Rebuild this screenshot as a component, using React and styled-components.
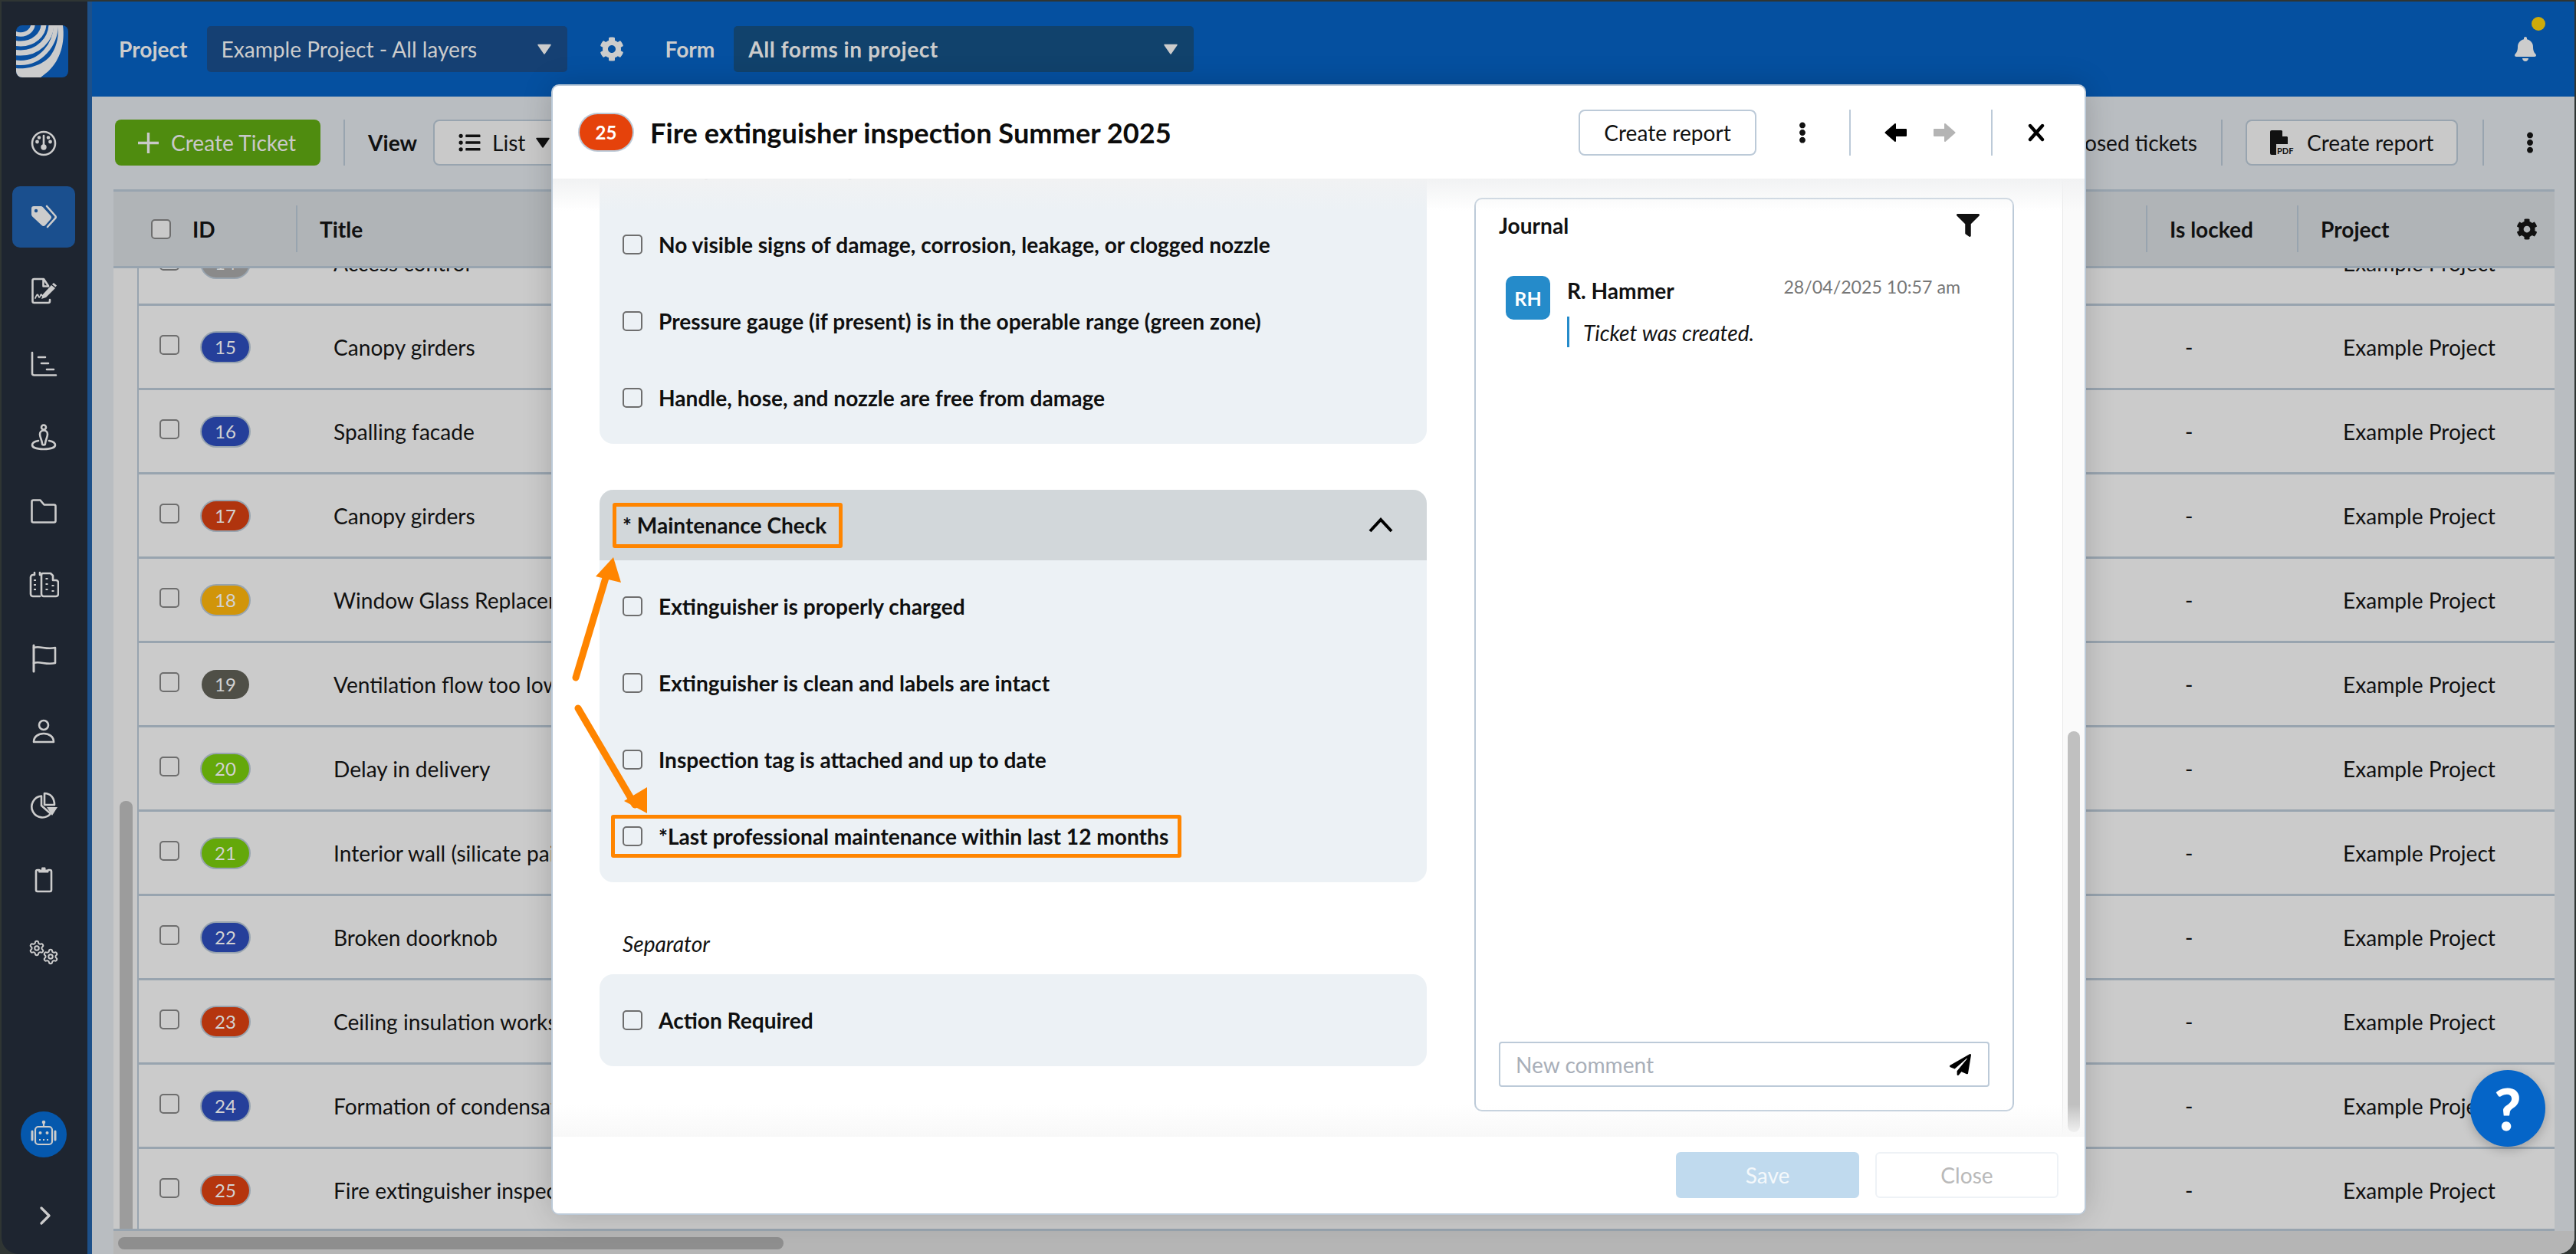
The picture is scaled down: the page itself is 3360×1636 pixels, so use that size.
import React from 'react';
import styled, { createGlobalStyle } from 'styled-components';
import { FaCog, FaBell, FaFilter, FaPaperPlane, FaEllipsisV, FaListUl } from 'react-icons/fa';
import { Settings } from 'lucide-react';

const Global = createGlobalStyle`
  html, body { margin: 0; padding: 0; background: #2f3533; }
  body { font-family: "Lato", "Liberation Sans", sans-serif; font-size: 28.1px; color: #111; }
  *, *::before, *::after { box-sizing: border-box; }
`;

const Window = styled.div`
  position: relative;
  width: 3360px;
  height: 1636px;
  padding: 2px 2px 0 2px;
  overflow: hidden;
`;
const Shell = styled.div`
  display: flex;
  width: 100%;
  height: 100%;
  border-radius: 0 0 22px 22px;
  overflow: hidden;
`;
const Sidebar = styled.nav`
  flex: 0 0 118px;
  display: flex;
  flex-direction: column;
  align-items: center;
  background: #1e2530;
  border-right: 6px solid #1d5089;
  padding: 31px 2px 30px 0;
  color: #cccccc;
`;
const Logo = styled.svg`
  width: 68px;
  height: 68px;
  margin: 0 0 46px -4px;
  flex: none;
`;
const NavItem = styled.div`
  flex: none;
  width: 82px;
  height: 80px;
  margin-bottom: 16px;
  display: flex;
  align-items: center;
  justify-content: center;
  border-radius: 10px;
  background: ${p => (p.$active ? '#1a4f8e' : 'transparent')};
`;
const NavSvg = styled.svg`
  width: 40px;
  height: 40px;
  fill: none;
  stroke: currentColor;
  stroke-width: 2.6;
  stroke-linecap: round;
  stroke-linejoin: round;
`;
const RobotCircle = styled.div`
  margin-top: auto;
  width: 60px;
  height: 60px;
  border-radius: 50%;
  background: #0558ad;
  display: flex;
  align-items: center;
  justify-content: center;
`;
const Expand = styled.div`
  margin-top: 56px;
  height: 40px;
  margin-left: 4px;
  display: flex;
  align-items: center;
`;
const Main = styled.div`
  flex: 1;
  min-width: 0;
  display: flex;
  flex-direction: column;
  background: #b9bdc1;
`;
const TopBar = styled.header`
  flex: 0 0 124px;
  display: flex;
  align-items: center;
  padding: 0 50px 0 35px;
  background: #0550a0;
  color: #cccccc;
`;
const TopLabel = styled.span`
  font-weight: 700;
  margin-right: ${p => p.$gap}px;
`;
const TopSelect = styled.div`
  width: ${p => p.$width}px;
  height: 60px;
  border-radius: 5px;
  background: ${p => p.$bg};
  font-weight: ${p => p.$weight};
  letter-spacing: ${p => p.$spacing || 0}px;
  display: flex;
  align-items: center;
  justify-content: space-between;
  padding: 0 21px 0 19px;
`;
const TopGear = styled(FaCog)`
  width: 32px;
  height: 32px;
  margin: 0 54px 0 42px;
`;
const BellWrap = styled.div`
  position: relative;
  margin-left: auto;
  width: 28px;
  height: 32px;
`;
const BellIcon = styled(FaBell)`
  width: 28px;
  height: 32px;
`;
const BellDot = styled.span`
  position: absolute;
  top: -26px;
  left: 22px;
  width: 18px;
  height: 18px;
  border-radius: 50%;
  background: #cdaa0a;
`;
const Caret = styled.svg`
  width: 18px;
  height: 14px;
  fill: currentColor;
`;
const Toolbar = styled.div`
  flex: 0 0 121px;
  display: flex;
  align-items: flex-start;
  padding: 30px 0 0 30px;
`;
const CreateButton = styled.div`
  width: 268px;
  height: 60px;
  background: #4f8c0f;
  border-radius: 8px;
  color: #c9c9c9;
  display: flex;
  align-items: center;
  gap: 16px;
  padding-left: 30px;
`;
const PlusIcon = styled.svg`
  width: 27px;
  height: 27px;
  stroke: #c9c9c9;
  stroke-width: 3.4;
  fill: none;
`;
const ToolDivider = styled.span`
  flex: none;
  width: 2px;
  height: 60px;
  background: #98a4af;
  margin: ${p => p.$margin};
`;
const ToolLabel = styled.span`
  font-weight: 700;
  line-height: 60px;
  margin-right: 21px;
`;
const OutlineButton = styled.div`
  flex: none;
  height: 60px;
  width: ${p => p.$width}px;
  border: 2px solid #98a4af;
  border-radius: 8px;
  background: #c9c9c9;
  display: flex;
  align-items: center;
  gap: ${p => p.$gap}px;
  padding-left: ${p => p.$pad}px;
`;
const ListGlyph = styled(FaListUl)`
  width: 31px;
  height: 28px;
`;
const RightTools = styled.div`
  margin-left: auto;
  display: flex;
  align-items: flex-start;
  padding-right: 44px;
`;
const ClosedTickets = styled.span`
  line-height: 60px;
`;
const MoreIcon = styled(FaEllipsisV)`
  width: 28px;
  height: 28px;
  margin-top: 16px;
`;
const TableArea = styled.div`
  flex: 1;
  min-height: 0;
  display: flex;
  flex-direction: column;
  margin-left: 28px;
`;
const TableHead = styled.div`
  flex: 0 0 103px;
  margin-right: 26px;
  display: flex;
  align-items: center;
  background: #b0b4b7;
  border-top: 3px solid #98a4af;
  border-bottom: 3px solid #98a4af;
  font-weight: 700;
  position: relative;
  z-index: 1;
`;
const HeadFirst = styled.div`
  flex: 0 0 238px;
  display: flex;
  align-items: center;
  padding-left: 49px;
  gap: 28px;
`;
const HeadCell = styled.div`
  flex: ${p => (p.$width ? `0 0 ${p.$width}px` : 1)};
  height: 61px;
  border-left: 2px solid #98a4af;
  display: flex;
  align-items: center;
  justify-content: space-between;
  padding: 0 22px 0 ${p => p.$pad || 29}px;
`;
const HeadGear = styled(FaCog)`
  width: 28px;
  height: 28px;
`;
const Check = styled.span`
  flex: none;
  display: block;
  width: 26px;
  height: 26px;
  border: 2px solid ${p => p.$color || '#6e6e6e'};
  border-radius: 5px;
  background: ${p => p.$bg || 'transparent'};
`;
const TableBody = styled.div`
  flex: 1;
  min-height: 0;
  margin-right: 26px;
  display: flex;
  overflow: hidden;
  border-bottom: 3px solid #98a4af;
`;
const VTrack = styled.div`
  flex: 0 0 31px;
  background: #c8c8c8;
  padding: 0 6px 0 8px;
  display: flex;
  flex-direction: column;
  justify-content: flex-end;
`;
const VThumb = styled.div`
  height: 558px;
  background: #9c9c9c;
  border-radius: 8px 8px 0 0;
`;
const Rows = styled.div`
  flex: 1;
  min-width: 0;
  background: #cbcbcb;
  border-left: 2px solid #98a4af;
  overflow: hidden;
`;
const RowStack = styled.div`
  margin-top: -61px;
`;
const Row = styled.div`
  height: 110px;
  display: flex;
  align-items: center;
  border-bottom: 3px solid #98a4af;
`;
const RowCheckCell = styled.div`
  flex: 0 0 82px;
  padding-left: 27px;
  margin-top: -5px;
`;
const RowBadgeCell = styled.div`
  flex: 0 0 172px;
`;
const Badge = styled.span`
  display: flex;
  align-items: center;
  justify-content: center;
  width: 62px;
  height: 38px;
  border-radius: 19px;
  font-size: 24px;
  color: #d2d2d2;
  background: ${p => p.$bg};
  box-shadow: ${p => (p.$plain ? 'none' : '0 0 0 2px #98a4af')};
`;
const RowTitle = styled.div`
  flex: 1;
  min-width: 0;
  white-space: nowrap;
  overflow: hidden;
`;
const RowDash = styled.div`
  flex: 0 0 206px;
`;
const RowProject = styled.div`
  flex: 0 0 276px;
  white-space: nowrap;
`;
const HScroll = styled.div`
  flex: 0 0 30px;
  background: #b5b5b5;
  padding: 8px 0 0 6px;
`;
const HThumb = styled.div`
  width: 868px;
  height: 16px;
  border-radius: 8px;
  background: #8e8e8e;
`;
const Help = styled.div`
  position: absolute;
  left: 3222px;
  top: 1396px;
  width: 98px;
  height: 100px;
  border-radius: 50%;
  background: #0565c8;
  color: #fff;
  font: 900 76px/100px "Lato", sans-serif;
  text-align: center;
  box-shadow: 0 4px 14px rgba(0, 0, 0, 0.22);
  z-index: 3;
`;

/* Modal */
const Modal = styled.section`
  position: absolute;
  left: 721px;
  top: 112px;
  width: 1998px;
  height: 1471px;
  display: flex;
  flex-direction: column;
  background: #fff;
  border-radius: 8px;
  overflow: hidden;
  z-index: 2;
`;
const ModalGlow = styled.div`
  position: absolute;
  left: 721px;
  top: 112px;
  width: 1998px;
  height: 1471px;
  border-radius: 8px;
  box-shadow: 0 0 0 2px #bccad8, 0 0 40px rgba(0, 0, 0, 0.2);
  z-index: 1;
`;
const ModalHeader = styled.header`
  flex: 0 0 121px;
  display: flex;
  align-items: center;
  padding-left: 35px;
  position: relative;
  z-index: 2;
  background: #fff;
`;
const ModalBadge = styled.span`
  flex: none;
  width: 69px;
  height: 47px;
  border-radius: 24px;
  background: #e5420b;
  box-shadow: 0 0 0 2px #bccad8;
  color: #fff;
  font-size: 24px;
  font-weight: 700;
  display: flex;
  align-items: center;
  justify-content: center;
`;
const ModalTitle = styled.h1`
  margin: 0 0 0 23px;
  font-size: 36.2px;
  font-weight: 700;
  color: #0c0c0c;
  flex: 1;
`;
const ReportButton = styled.div`
  width: 232px;
  height: 60px;
  border: 2px solid #bccad8;
  border-radius: 8px;
  display: flex;
  align-items: center;
  justify-content: center;
`;
const HeaderTools = styled.div`
  display: flex;
  align-items: center;
  padding-right: 52px;
`;
const HeaderDots = styled(FaEllipsisV)`
  width: 28px;
  height: 28px;
  margin: 0 47px 0 46px;
`;
const HeaderDivider = styled.span`
  width: 2px;
  height: 60px;
  background: #bccad8;
`;
const ArrowSvg = styled.svg`
  flex: none;
  width: 30px;
  height: 26px;
  margin: ${p => p.$margin};
  fill: ${p => p.$color};
  stroke: ${p => p.$color};
  stroke-width: 2;
  stroke-linejoin: round;
`;
const CloseSvg = styled.svg`
  flex: none;
  width: 22px;
  height: 24px;
  margin-left: 46px;
  stroke: #000;
  stroke-width: 4.4;
  stroke-linecap: round;
`;
const ModalBody = styled.div`
  flex: 1;
  min-height: 0;
  display: flex;
  position: relative;
  overflow: hidden;
  &::before, &::after {
    content: '';
    position: absolute;
    left: 0;
    right: 0;
    height: 42px;
    pointer-events: none;
    z-index: 1;
  }
  &::before { top: 0; background: linear-gradient(#f1f2f3, rgba(255, 255, 255, 0)); }
  &::after { bottom: 0; background: linear-gradient(rgba(255, 255, 255, 0), #f8f8f8); }
`;
const FormColumn = styled.div`
  flex: 0 0 1140px;
  padding-left: 61px;
  margin: -74px 62px 0 0;
`;
const Section = styled.div`
  background: #ecf1f5;
  border-radius: 18px;
  padding: ${p => (p.$flush ? '0 0 10px' : '10px 0')};
  margin-bottom: 60px;
  &:last-child { margin-bottom: 0; }
`;
const SectionHead = styled.div`
  height: 92px;
  background: #d2d7da;
  border-radius: 18px 18px 0 0;
  margin-bottom: 10px;
  display: flex;
  align-items: center;
  justify-content: space-between;
  padding: 0 44px 0 17px;
`;
const HeadHighlight = styled.div`
  width: 300px;
  height: 59px;
  border: 5px solid #ff8500;
  border-radius: 3px;
  padding-left: 8px;
  display: flex;
  align-items: center;
  font-weight: 700;
`;
const Chevron = styled.svg`
  width: 32px;
  height: 20px;
  fill: none;
  stroke: #000;
  stroke-width: 4;
`;
const CheckRow = styled.div`
  position: relative;
  height: 100px;
  display: flex;
  align-items: center;
  gap: 21px;
  padding-left: 30px;
  font-weight: 700;
  color: #0f0f0f;
  ${p => p.$marked && `
    &::after {
      content: '';
      position: absolute;
      left: 15px;
      top: 22px;
      width: 744px;
      height: 56px;
      border: 5px solid #ff8500;
      border-radius: 3px;
    }
  `}
`;
const SeparatorLabel = styled.div`
  font-style: italic;
  line-height: 40px;
  padding-left: 30px;
  margin: 0 0 20px;
`;
const JournalCard = styled.aside`
  flex: 0 0 704px;
  height: 1192px;
  margin: 25px 63px 0 0;
  border: 2px solid #bccad8;
  border-radius: 10px;
  display: flex;
  flex-direction: column;
  padding: 0 30px 30px;
`;
const JournalHead = styled.div`
  height: 68px;
  display: flex;
  align-items: center;
  justify-content: space-between;
  font-weight: 700;
  padding: 0 12px 0 0;
`;
const FilterIcon = styled(FaFilter)`
  width: 32px;
  height: 30px;
`;
const Entry = styled.div`
  display: flex;
  margin: 32px 0 0 9px;
  flex: 1;
  gap: 22px;
`;
const Avatar = styled.div`
  flex: none;
  width: 58px;
  height: 57px;
  border-radius: 10px;
  background: #258bca;
  color: #fff;
  font-size: 25px;
  font-weight: 700;
  display: flex;
  align-items: center;
  justify-content: center;
`;
const EntryBody = styled.div`
  flex: 1;
`;
const EntryTop = styled.div`
  display: flex;
  justify-content: space-between;
  align-items: flex-start;
  padding-right: 38px;
`;
const Author = styled.span`
  font-weight: 700;
  margin-top: 2px;
`;
const Stamp = styled.span`
  font-size: 23.2px;
  color: #777;
`;
const Quote = styled.div`
  margin-top: 17px;
  border-left: 3px solid #258bca;
  height: 40px;
  line-height: 42px;
  padding-left: 18px;
  font-style: italic;
`;
const CommentBox = styled.div`
  height: 59px;
  border: 2px solid #bccad8;
  border-radius: 4px;
  display: flex;
  align-items: center;
  justify-content: space-between;
  padding: 0 22px 0 20px;
  color: #a9afb9;
`;
const SendIcon = styled(FaPaperPlane)`
  width: 28px;
  height: 28px;
  color: #000;
`;
const ScrollGutter = styled.div`
  flex: 0 0 29px;
  background: #fafafa;
  border-left: 1px solid #e8e8e8;
  padding: 0 6px 6px;
  display: flex;
  flex-direction: column;
  justify-content: flex-end;
`;
const ModalThumb = styled.div`
  height: 523px;
  border-radius: 8px;
  background: #c0c0c0;
`;
const ModalFooter = styled.footer`
  flex: 0 0 100px;
  background: #fff;
  display: flex;
  align-items: center;
  justify-content: flex-end;
  gap: 21px;
  padding: 0 34px 0 0;
  position: relative;
  z-index: 2;
`;
const FooterButton = styled.div`
  width: 239px;
  height: 60px;
  border-radius: 6px;
  display: flex;
  align-items: center;
  justify-content: center;
  background: ${p => (p.$primary ? '#c0daee' : '#fff')};
  color: ${p => (p.$primary ? '#f4f8fb' : '#b9b9b9')};
  border: 2px solid ${p => (p.$primary ? '#c0daee' : '#eef2f6')};
`;
const Annotation = styled.svg`
  position: absolute;
  left: 740px;
  top: 720px;
  width: 120px;
  height: 350px;
  z-index: 4;
  pointer-events: none;
`;

const CaretDown = () => (
  <Caret viewBox="0 0 18 14"><path d="M1 1.5h16L9 13z" stroke="currentColor" strokeWidth="1.5" strokeLinejoin="round" /></Caret>
);

const icons = [
  <NavSvg key="0" viewBox="0 0 40 40"><circle cx="20" cy="20" r="15" /><path d="M20 10v13" /><circle cx="20" cy="25" r="2.4" fill="currentColor" /><circle cx="11.5" cy="18" r="1.1" fill="currentColor" /><circle cx="14" cy="12.5" r="1" fill="currentColor" /><circle cx="26" cy="12.5" r="1" fill="currentColor" /><circle cx="28.5" cy="18" r="1.1" fill="currentColor" /></NavSvg>,
  <NavSvg key="1" viewBox="0 0 40 40"><path fill="currentColor" stroke="none" d="M4 9a3 3 0 0 1 3-3h9a4 4 0 0 1 3 1.3l10 11a3.5 3.5 0 0 1 0 4.7l-7 8a3 3 0 0 1-4.5 0L5.2 19.5A4 4 0 0 1 4 17z" /><circle cx="10" cy="12" r="2.2" fill="#1a4f8e" stroke="none" /><path d="M24 6l11 12.5a2.5 2.5 0 0 1 0 3.3L25 33" /></NavSvg>,
  <NavSvg key="2" viewBox="0 0 40 40"><path d="M26 14l-6-9H7.5a2 2 0 0 0-2 2v27a2 2 0 0 0 2 2H26a2 2 0 0 0 2-2v-2" /><path d="M19.500 6v8.500H26" /><path d="M9 30c2-5 3-6 4-3s2 2 3-1 2 3 5 2" strokeWidth="1.8" /><path fill="currentColor" stroke="none" d="M30 13l5 4-12 12-6 2 2-6z" /><path d="M33 10l4 3.400-1.600 2-4.500-3.500z" fill="currentColor" stroke="none" /></NavSvg>,
  <NavSvg key="3" viewBox="0 0 40 40"><path d="M5 5v27a2.500 2.500 0 0 0 2.500 2.500H36" /><path d="M13 11h9M17 19h9M24 27h9" /></NavSvg>,
  <NavSvg key="4" viewBox="0 0 40 40"><circle cx="20" cy="6.500" r="3" /><path d="M15 15.500a5 5 0 0 1 10 0c0 4-2.500 7-3 12a2 2 0 0 1-4 0c-.5-5-3-8-3-12z" /><path d="M13 24c-5 1-8 3-8 5.500C5 33 11.500 35 20 35s15-2 15-5.500c0-2.500-3-4.500-8-5.500" /></NavSvg>,
  <NavSvg key="5" viewBox="0 0 40 40"><path d="M4.500 32.500V7.500a2 2 0 0 1 2-2h9l5 6h13a2 2 0 0 1 2 2v19a2 2 0 0 1-2 2h-27a2 2 0 0 1-2-2z" /></NavSvg>,
  <NavSvg key="6" viewBox="0 0 40 40"><path d="M15 35H6a3 3 0 0 1-3-3V10a3 3 0 0 1 3-3h2V4M15 4v3h2" /><path d="M17 7a2 2 0 0 1 2-2h10l3 3v6h4a3 3 0 0 1 3 3v15a3 3 0 0 1-3 3H20a3 3 0 0 1-3-3z" /><path d="M8.500 13v2M8.500 19v2M8.500 25v2M24 11v2M24 18v2M24 25v2M32 20v2M32 27v2" strokeWidth="3" strokeLinecap="butt" /></NavSvg>,
  <NavSvg key="7" viewBox="0 0 40 40"><path d="M7 3v34" strokeWidth="3" /><path d="M7 6c8-3 16 3 28 0v20c-12 3-20-3-28 0" /></NavSvg>,
  <NavSvg key="8" viewBox="0 0 40 40"><circle cx="20" cy="11" r="6" /><path d="M7 33c0-7 6-11 13-11s13 4 13 11z" /></NavSvg>,
  <NavSvg key="9" viewBox="0 0 40 40"><path d="M17 7.500a14 14 0 1 0 12 23L17 20z" /><path d="M21 19V4c8 0 13 6 13 15z" /><path fill="currentColor" stroke="none" d="M24 22h14l-7 11z" /></NavSvg>,
  <NavSvg key="10" viewBox="0 0 40 40"><path d="M14 8h-2a2 2 0 0 0-2 2v24a2 2 0 0 0 2 2h16a2 2 0 0 0 2-2V10a2 2 0 0 0-2-2h-2" /><path fill="currentColor" d="M14 8h12v3H14zM18 5h4v3h-4z" strokeWidth="1" /></NavSvg>,
  <NavSvg key="11" viewBox="0 0 40 40">
    <Settings x="0" y="3" width="22" height="22" strokeWidth="2.2" />
    <Settings x="18" y="14" width="22" height="22" strokeWidth="2.2" />
  </NavSvg>,
];

const RobotSvg = styled.svg`
  width: 42px;
  height: 42px;
  fill: none;
  stroke: #cccccc;
  stroke-width: 2.2;
`;
const ExpandSvg = styled.svg`
  width: 14px;
  height: 24px;
  fill: none;
  stroke: #cccccc;
  stroke-width: 3.2;
  stroke-linecap: round;
  stroke-linejoin: round;
`;
const PdfSvg = styled.svg`
  width: 34px;
  height: 32px;
`;
const PdfText = styled.text`
  font: 700 11px "Lato", sans-serif;
  fill: #111;
`;

const rows = [
  ['14', '#8a8a8a', 'Access control'],
  ['15', '#253f9a', 'Canopy girders'],
  ['16', '#253f9a', 'Spalling facade'],
  ['17', '#b0340e', 'Canopy girders'],
  ['18', '#d1950a', 'Window Glass Replacement'],
  ['19', '#4f4f47', 'Ventilation flow too low', true],
  ['20', '#64a80a', 'Delay in delivery'],
  ['21', '#64a80a', 'Interior wall (silicate paint)'],
  ['22', '#253f9a', 'Broken doorknob'],
  ['23', '#b5350e', 'Ceiling insulation works'],
  ['24', '#253f9a', 'Formation of condensation'],
  ['25', '#b5350e', 'Fire extinguisher inspection Summer 2025'],
];

export default function App() {
  return (
    <Window>
      <Global />
      <Shell>
        <Sidebar>
          <Logo viewBox="0 0 68 68">
            <defs><clipPath id="lc"><rect width="68" height="68" rx="8" /></clipPath></defs>
            <g clipPath="url(#lc)" fill="none" stroke="#cccccc">
              <rect width="68" height="68" fill="#0a50a0" stroke="none" />
              <ellipse cx="6" cy="-2" rx="16" ry="14" strokeWidth="5.500" />
              <ellipse cx="6" cy="-2" rx="30" ry="26" strokeWidth="7" />
              <ellipse cx="6" cy="-2" rx="40" ry="38" strokeWidth="7" />
              <ellipse cx="6" cy="-2" rx="46" ry="51" strokeWidth="6" />
              <path fill="#cccccc" stroke="none" d="M0 56C18 58 38 50 46 38C54 26 56 12 54 0L61 0C64 22 58 45 42 60L32 68L0 68Z" />
            </g>
          </Logo>
          {icons.map((icon, i) => <NavItem key={i} $active={i === 1}>{icon}</NavItem>)}
          <RobotCircle>
            <RobotSvg viewBox="0 0 42 42">
              <rect x="10" y="11" width="22" height="23" rx="4" />
              <path d="M21 11V5" /><circle cx="21" cy="5" r="1.200" fill="#ccc" />
              <path d="M6 17v11M36 17v11" strokeWidth="3" strokeLinecap="round" />
              <circle cx="16.500" cy="19" r="2" fill="#ccc" stroke="none" /><circle cx="25.500" cy="19" r="2" fill="#ccc" stroke="none" />
              <path d="M15 28h2M20 28h2M25 28h2" />
            </RobotSvg>
          </RobotCircle>
          <Expand>
            <ExpandSvg viewBox="0 0 14 24"><path d="M2 2l10 10L2 22" /></ExpandSvg>
          </Expand>
        </Sidebar>
        <Main>
          <TopBar>
            <TopLabel $gap={25}>Project</TopLabel>
            <TopSelect $width={470} $bg="#154073" $weight={400}>Example Project - All layers<CaretDown /></TopSelect>
            <TopGear />
            <TopLabel $gap={25}>Form</TopLabel>
            <TopSelect $width={600} $bg="#11426c" $weight={700} $spacing={0.5}>All forms in project<CaretDown /></TopSelect>
            <BellWrap><BellIcon /><BellDot /></BellWrap>
          </TopBar>
          <Toolbar>
            <CreateButton>
              <PlusIcon viewBox="0 0 27 27"><path d="M13.500 0v27M0 13.500h27" /></PlusIcon>
              Create Ticket
            </CreateButton>
            <ToolDivider $margin="0 30px 0 30px" />
            <ToolLabel>View</ToolLabel>
            <OutlineButton $width={215} $gap={14} $pad={30}>
              <ListGlyph />List<CaretDown />
            </OutlineButton>
            <RightTools>
              <ClosedTickets>Show closed tickets</ClosedTickets>
              <ToolDivider $margin="0 30px 0 31px" />
              <OutlineButton $width={277} $gap={14} $pad={30}>
                <PdfSvg viewBox="0 0 34 32">
                  <path d="M2 0h13l8 9v9H8v14H2a2 2 0 0 1-2-2V2a2 2 0 0 1 2-2z" fill="#111" />
                  <path d="M16 0l7 8h-7z" fill="#c9c9c9" />
                  <PdfText x="9" y="31">PDF</PdfText>
                </PdfSvg>
                Create report
              </OutlineButton>
              <ToolDivider $margin="0 46px 0 32px" />
              <MoreIcon />
            </RightTools>
          </Toolbar>
          <TableArea>
            <TableHead>
              <HeadFirst><Check $bg="#c9c9c9" />ID</HeadFirst>
              <HeadCell>Title</HeadCell>
              <HeadCell $width={197}>Is locked</HeadCell>
              <HeadCell $width={336}>Project<HeadGear /></HeadCell>
            </TableHead>
            <TableBody>
              <VTrack><VThumb /></VTrack>
              <Rows>
                <RowStack>
                  {rows.map(r => (
                    <Row key={r[0]}>
                      <RowCheckCell><Check /></RowCheckCell>
                      <RowBadgeCell><Badge $bg={r[1]} $plain={r[3]}>{r[0]}</Badge></RowBadgeCell>
                      <RowTitle>{r[2]}</RowTitle>
                      <RowDash>-</RowDash>
                      <RowProject>Example Project</RowProject>
                    </Row>
                  ))}
                </RowStack>
              </Rows>
            </TableBody>
            <HScroll><HThumb /></HScroll>
          </TableArea>
        </Main>
      </Shell>

      <ModalGlow />
      <Modal>
        <ModalHeader>
          <ModalBadge>25</ModalBadge>
          <ModalTitle>Fire extinguisher inspection Summer 2025</ModalTitle>
          <HeaderTools>
            <ReportButton>Create report</ReportButton>
            <HeaderDots />
            <HeaderDivider />
            <ArrowSvg viewBox="0 0 30 26" $margin="0 33px 0 44px" $color="#000">
              <path d="M1.500 13L14 2v7h14v8H14v7z" />
            </ArrowSvg>
            <ArrowSvg viewBox="0 0 30 26" $margin="0 46px 0 0" $color="#b4b4b4">
              <path d="M28.500 13L16 2v7H2v8h14v7z" />
            </ArrowSvg>
            <HeaderDivider />
            <CloseSvg viewBox="0 0 22 24"><path d="M3 3l16 18M19 3L3 21" /></CloseSvg>
          </HeaderTools>
        </ModalHeader>
        <ModalBody>
          <FormColumn>
            <Section>
              <CheckRow><Check />Easily visible and in place</CheckRow>
              <CheckRow><Check />No visible signs of damage, corrosion, leakage, or clogged nozzle</CheckRow>
              <CheckRow><Check />Pressure gauge (if present) is in the operable range (green zone)</CheckRow>
              <CheckRow><Check />Handle, hose, and nozzle are free from damage</CheckRow>
            </Section>
            <Section $flush>
              <SectionHead>
                <HeadHighlight>* Maintenance Check</HeadHighlight>
                <Chevron viewBox="0 0 32 20"><path d="M2 18L16 3l14 15" /></Chevron>
              </SectionHead>
              <CheckRow><Check />Extinguisher is properly charged</CheckRow>
              <CheckRow><Check />Extinguisher is clean and labels are intact</CheckRow>
              <CheckRow><Check />Inspection tag is attached and up to date</CheckRow>
              <CheckRow $marked><Check />*Last professional maintenance within last 12 months</CheckRow>
            </Section>
            <SeparatorLabel>Separator</SeparatorLabel>
            <Section>
              <CheckRow><Check />Action Required</CheckRow>
            </Section>
          </FormColumn>
          <JournalCard>
            <JournalHead>Journal<FilterIcon /></JournalHead>
            <Entry>
              <Avatar>RH</Avatar>
              <EntryBody>
                <EntryTop><Author>R. Hammer</Author><Stamp>28/04/2025 10:57 am</Stamp></EntryTop>
                <Quote>Ticket was created.</Quote>
              </EntryBody>
            </Entry>
            <CommentBox>New comment<SendIcon /></CommentBox>
          </JournalCard>
          <ScrollGutter><ModalThumb /></ScrollGutter>
        </ModalBody>
        <ModalFooter>
          <FooterButton $primary>Save</FooterButton>
          <FooterButton>Close</FooterButton>
        </ModalFooter>
      </Modal>
      <Annotation viewBox="0 0 120 350">
        <path d="M11 164L53 24" stroke="#ff8500" strokeWidth="9" strokeLinecap="round" fill="none" />
        <path d="M60 7L37 32 70 40z" fill="#ff8500" />
        <path d="M14 204L88 330" stroke="#ff8500" strokeWidth="9" strokeLinecap="round" fill="none" />
        <path d="M104 341L74 325 104 307z" fill="#ff8500" />
      </Annotation>
      <Help>?</Help>
    </Window>
  );
}
